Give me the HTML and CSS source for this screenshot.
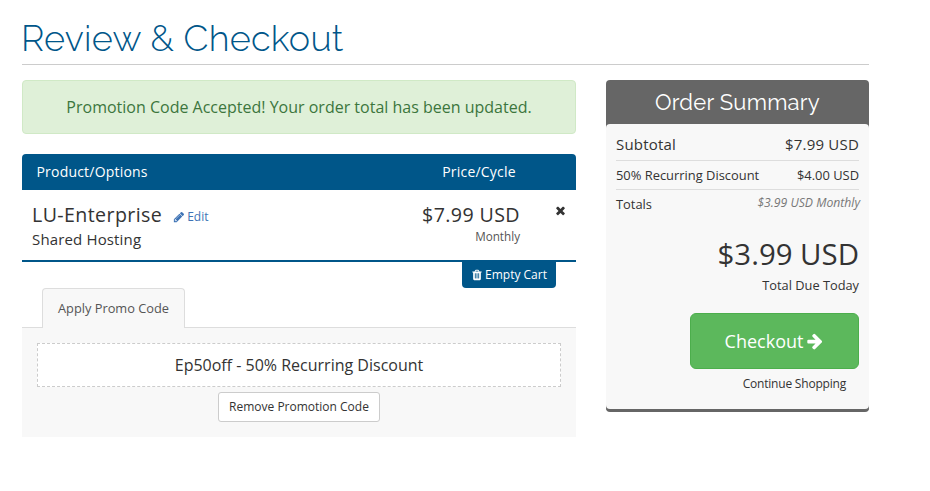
FILE: index.html
```html
<!DOCTYPE html>
<html lang="en">
<head>
  <meta charset="UTF-8" />
  <meta name="viewport" content="width=device-width, initial-scale=1.0"/>
  <title>Review &amp; Checkout</title>
  <link rel="stylesheet" href="styles.css">
</head>
<body>

  <div class="cart-page">
    <header class="page-header">
      <h1><span>Review &amp; Checkout</span></h1>
    </header>

    <div class="cart-columns">
      <main class="cart-body">
        <div class="alert-success"><span>Promotion Code Accepted! Your order total has been updated.</span></div>

        <div class="items-header">
          <span class="col-product">Product/Options</span>
          <span class="col-price">Price/Cycle</span>
        </div>

        <div class="cart-item">
          <div class="item-info">
            <div class="item-title">
              <span class="item-name">LU-Enterprise</span>
              <a href="#" class="item-edit">
                <svg class="icon" viewBox="0 0 1792 1792"><path d="M491 1536l91-91-235-235-91 91v107h128v128h107zm523-928q0-22-22-22-10 0-17 7l-542 542q-7 7-7 17 0 22 22 22 10 0 17-7l542-542q7-7 7-17zm-54-192l416 416-832 832h-416v-416zm683 96q0 53-37 90l-166 166-416-416 166-165q36-38 90-38 53 0 91 38l235 234q37 39 37 91z"/></svg>
                <span>Edit</span>
              </a>
            </div>
            <div class="item-group"><span>Shared Hosting</span></div>
          </div>
          <div class="item-price">
            <div class="amount"><span>$7.99 USD</span></div>
            <div class="cycle"><span>Monthly</span></div>
          </div>
          <button class="item-remove" aria-label="Remove">
            <svg class="icon" viewBox="0 0 1792 1792"><path d="M1490 1322q0 40-28 68l-136 136q-28 28-68 28t-68-28l-294-294-294 294q-28 28-68 28t-68-28l-136-136q-28-28-28-68t28-68l294-294-294-294q-28-28-28-68t28-68l136-136q28-28 68-28t68 28l294 294 294-294q28-28 68-28t68 28l136 136q28 28 28 68t-28 68l-294 294 294 294q28 28 28 68z"/></svg>
          </button>
        </div>

        <div class="empty-cart">
          <button class="empty-btn">
            <svg class="icon" viewBox="0 0 1792 1792"><path d="M704 1376v-704q0-14-9-23t-23-9h-64q-14 0-23 9t-9 23v704q0 14 9 23t23 9h64q14 0 23-9t9-23zm256 0v-704q0-14-9-23t-23-9h-64q-14 0-23 9t-9 23v704q0 14 9 23t23 9h64q14 0 23-9t9-23zm256 0v-704q0-14-9-23t-23-9h-64q-14 0-23 9t-9 23v704q0 14 9 23t23 9h64q14 0 23-9t9-23zm-544-992h448l-48-117q-7-9-17-11h-317q-10 2-17 11zm928 32v64q0 14-9 23t-23 9h-96v948q0 83-47 143.5t-113 60.5h-832q-66 0-113-58.5t-47-141.5v-952h-96q-14 0-23-9t-9-23v-64q0-14 9-23t23-9h309l70-167q15-37 54-63t79-26h320q40 0 79 26t54 63l70 167h309q14 0 23 9t9 23z"/></svg>
            <span>Empty Cart</span>
          </button>
        </div>

        <div class="promo-tabs">
          <a href="#" class="tab active">Apply Promo Code</a>
        </div>
        <div class="promo-content">
          <div class="promo-code"><span>Ep50off - 50% Recurring Discount</span></div>
          <button class="btn-default"><span>Remove Promotion Code</span></button>
        </div>
      </main>

      <aside class="order-summary">
        <h2><span>Order Summary</span></h2>
        <div class="summary-box">
          <div class="summary-row subtotal"><span>Subtotal</span><span>$7.99 USD</span></div>
          <div class="summary-row discount"><span>50% Recurring Discount</span><span>$4.00 USD</span></div>
          <div class="summary-row totals"><span>Totals</span><em>$3.99 USD Monthly</em></div>
          <div class="total-amount"><span>$3.99 USD</span></div>
          <div class="total-label"><span>Total Due Today</span></div>
          <button class="btn-checkout">
            <span>Checkout</span>
            <svg class="icon" viewBox="0 0 1792 1792"><path d="M1600 960q0 54-37 91l-651 651q-39 37-91 37-51 0-90-37l-75-75q-38-38-38-91t38-91l293-293h-704q-52 0-84.5-37.5t-32.5-90.5v-128q0-53 32.5-90.5t84.5-37.5h704l-293-294q-38-36-38-90t38-90l75-75q38-38 90-38 53 0 91 38l651 651q37 35 37 90z"/></svg>
          </button>
          <a href="#" class="continue-link">Continue Shopping</a>
        </div>
      </aside>
    </div>
  </div>

</body>
</html>
```
FILE: styles.css
```css
:root {
  --blue: #005689;
  --link: #3e73b5;
  --green: #5cb85c;
  --grey: #666;
  --panel: #f8f8f8;
}

* {
  box-sizing: border-box;
}

body {
  font-family: "Open Sans", sans-serif;
  margin: 0;
  background: #fff;
  color: #333;
}

a {
  text-decoration: none;
}

button {
  font-family: inherit;
  border: none;
  margin: 0;
  padding: 0;
  cursor: pointer;
}

.icon {
  width: 14px;
  height: 14px;
  fill: currentColor;
  flex: none;
}

.cart-page {
  width: 847px;
  margin-left: 22px;
}

.page-header {
  height: 65px;
  padding-top: 13px;
  border-bottom: 1px solid #ccc;
}

.page-header h1 {
  margin: 0;
  font-family: Raleway, Lato, sans-serif;
  font-size: 36px;
  font-weight: 300;
  line-height: 50px;
  letter-spacing: 0.25px;
  color: var(--blue);
}

.page-header h1 span {
  margin-left: -1px;
}

.cart-columns {
  display: grid;
  grid-template-columns: 554px 263px;
  gap: 30px;
  align-items: start;
  margin-top: 15px;
}

/* left column */
.alert-success {
  height: 54px;
  line-height: 52px;
  margin-bottom: 20px;
  text-align: center;
  font-size: 16px;
  color: #3c763d;
  background: #dff0d8;
  border: 1px solid #d0e9c6;
  border-radius: 4px;
}

.items-header {
  display: flex;
  height: 36px;
  line-height: 36px;
  font-size: 14px;
  font-weight: 500;
  letter-spacing: 0.2px;
  color: #fff;
  background: var(--blue);
  border-radius: 4px 4px 0 0;
}

.col-product {
  width: 405px;
  padding-left: 14.5px;
}

.col-price {
  width: 104px;
  text-align: center;
}

.cart-item {
  display: flex;
  height: 72px;
  padding: 10px 9px 10px 10px;
  border-bottom: 2px solid var(--blue);
}

.item-info {
  flex: 1;
}

.item-title {
  display: flex;
  align-items: center;
  gap: 11px;
  height: 29px;
}

.item-name,
.amount {
  font-size: 19.6px;
  line-height: 29px;
  letter-spacing: 0.4px;
}

.item-edit {
  display: flex;
  align-items: center;
  gap: 2px;
  padding-top: 4px;
  font-size: 12px;
  color: var(--link);
}

.item-edit .icon {
  width: 12px;
  height: 12px;
}

.item-group {
  font-size: 15px;
  line-height: 20px;
  letter-spacing: 0.15px;
}

.item-price {
  width: 120px;
  margin-right: 33px;
  text-align: right;
}

.cycle {
  font-size: 11.7px;
  line-height: 15px;
  color: #555;
}

.item-remove {
  width: 14px;
  height: 20px;
  color: #333;
  background: none;
}

.item-remove .icon {
  display: block;
  width: 13px;
  height: 13px;
  margin-left: 1px;
}

.empty-cart {
  display: flex;
  justify-content: flex-end;
  height: 26px;
  padding-right: 20px;
}

.empty-btn {
  display: flex;
  align-items: center;
  justify-content: center;
  gap: 2px;
  width: 94px;
  padding-bottom: 1px;
  font-size: 12px;
  font-weight: 500;
  color: #fff;
  background: var(--blue);
  border-radius: 0 0 4px 4px;
}

.empty-btn .icon {
  width: 12px;
  height: 12px;
}

.promo-tabs {
  display: flex;
  height: 40px;
  padding-left: 20px;
  border-bottom: 1px solid #ddd;
}

.tab {
  width: 143px;
  height: 40px;
  line-height: 39px;
  text-align: center;
  font-size: 12.8px;
  color: #555;
  background: var(--panel);
  border: 1px solid #ddd;
  border-bottom: none;
  border-radius: 4px 4px 0 0;
}

.promo-content {
  display: flex;
  flex-direction: column;
  align-items: center;
  height: 109px;
  padding: 15px;
  background: var(--panel);
}

.promo-code {
  align-self: stretch;
  height: 44px;
  line-height: 42px;
  margin-bottom: 5px;
  text-align: center;
  font-size: 16px;
  background: #fff;
  border: 1px dashed #ccc;
}

.btn-default {
  width: 162px;
  height: 30px;
  padding-bottom: 1px;
  font-size: 12px;
  color: #333;
  background: #fff;
  border: 1px solid #ccc;
  border-radius: 3px;
}

/* right column */
.order-summary {
  background: var(--grey);
  border-bottom: 3px solid var(--grey);
  border-radius: 4px;
}

.order-summary h2 {
  height: 44px;
  margin: 0;
  text-align: center;
  font-family: Raleway, Lato, sans-serif;
  font-size: 22px;
  font-weight: 400;
  line-height: 44px;
  letter-spacing: 0.25px;
  color: #fff;
}

.summary-box {
  display: flex;
  flex-direction: column;
  height: 285px;
  padding: 7px 10px;
  background: var(--panel);
  border-radius: 4px;
}

.summary-row {
  display: flex;
  justify-content: space-between;
  height: 29px;
  line-height: 28px;
  font-size: 12.9px;
  border-bottom: 1px solid #ddd;
}

.subtotal {
  height: 30px;
  line-height: 27px;
  font-size: 15px;
  letter-spacing: 0.2px;
}

.totals {
  border-bottom: none;
}

.totals em {
  margin-right: -1px;
  line-height: 26px;
  font-size: 12.2px;
  color: #777;
}

.total-amount {
  margin-top: 13px;
  text-align: right;
  font-size: 29.4px;
  line-height: 44px;
}

.total-label {
  text-align: right;
  font-size: 12.8px;
  line-height: 18px;
}

.btn-checkout {
  display: flex;
  align-items: center;
  justify-content: center;
  gap: 3px;
  align-self: flex-end;
  width: 169px;
  height: 56px;
  margin-top: 19px;
  font-size: 18px;
  color: #fff;
  background: var(--green);
  border: 1px solid #4cae4c;
  border-radius: 6px;
}

.btn-checkout .icon {
  width: 18px;
  height: 18px;
}

.continue-link {
  align-self: flex-end;
  padding-right: 13px;
  font-size: 12px;
  letter-spacing: -0.2px;
  line-height: 30px;
  color: #333;
}
```
